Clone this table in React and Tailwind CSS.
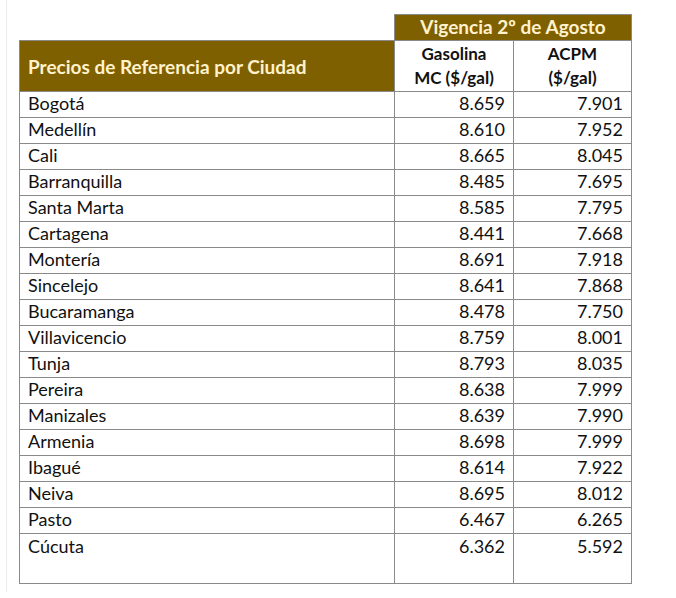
const rows = [
  ["Bogotá", "8.659", "7.901"],
  ["Medellín", "8.610", "7.952"],
  ["Cali", "8.665", "8.045"],
  ["Barranquilla", "8.485", "7.695"],
  ["Santa Marta", "8.585", "7.795"],
  ["Cartagena", "8.441", "7.668"],
  ["Montería", "8.691", "7.918"],
  ["Sincelejo", "8.641", "7.868"],
  ["Bucaramanga", "8.478", "7.750"],
  ["Villavicencio", "8.759", "8.001"],
  ["Tunja", "8.793", "8.035"],
  ["Pereira", "8.638", "7.999"],
  ["Manizales", "8.639", "7.990"],
  ["Armenia", "8.698", "7.999"],
  ["Ibagué", "8.614", "7.922"],
  ["Neiva", "8.695", "8.012"],
  ["Pasto", "6.467", "6.265"],
  ["Cúcuta", "6.362", "5.592"],
];

export default function App() {
  return (
    <div
      className="w-[676px] h-[598px] bg-white overflow-hidden pl-[6px]"
      style={{ fontFamily: "Lato, 'Open Sans', sans-serif" }}
    >
      <div className="h-[592px] border-l border-[#ececec] pl-[12px] pt-[14px]">
        <table className="border-collapse text-[18px] leading-none text-[#111]">
          <colgroup>
            <col className="w-[375px]" />
            <col className="w-[119px]" />
            <col className="w-[118px]" />
          </colgroup>
          <thead>
            <tr className="h-[26px]">
              <th className="p-0"></th>
              <th
                colSpan={2}
                className="bg-[#7f6000] text-[#fff2cc] text-[19px] font-bold text-center border border-[#8a8a8a] p-0 pb-[2px]"
              >
                Vigencia 2º de Agosto
              </th>
            </tr>
            <tr className="h-[51px]">
              <th className="bg-[#7f6000] text-[#fff2cc] text-[19px] font-bold text-left pl-[8px] border border-[#8a8a8a]">
                Precios de Referencia por Ciudad
              </th>
              <th className="font-bold text-[17px] text-center border border-[#8a8a8a] leading-[24px] p-0">
                Gasolina
                <br />
                MC ($/gal)
              </th>
              <th className="font-bold text-[17px] text-center border border-[#8a8a8a] leading-[24px] p-0">
                ACPM
                <br />
                ($/gal)
              </th>
            </tr>
          </thead>
          <tbody>
            {rows.map(([city, gas, acpm], i) => {
              const last = i === rows.length - 1;
              const pad = last ? "align-top pt-[3px]" : "pb-[3px]";
              return (
                <tr key={city} className={last ? "h-[50px]" : "h-[26px]"}>
                  <td className={"border border-[#8a8a8a] pl-[8px] " + pad}>
                    {city}
                  </td>
                  <td className={"border border-[#8a8a8a] text-right pr-[8px] " + pad}>
                    {gas}
                  </td>
                  <td className={"border border-[#8a8a8a] text-right pr-[8px] " + pad}>
                    {acpm}
                  </td>
                </tr>
              );
            })}
          </tbody>
        </table>
      </div>
    </div>
  );
}
